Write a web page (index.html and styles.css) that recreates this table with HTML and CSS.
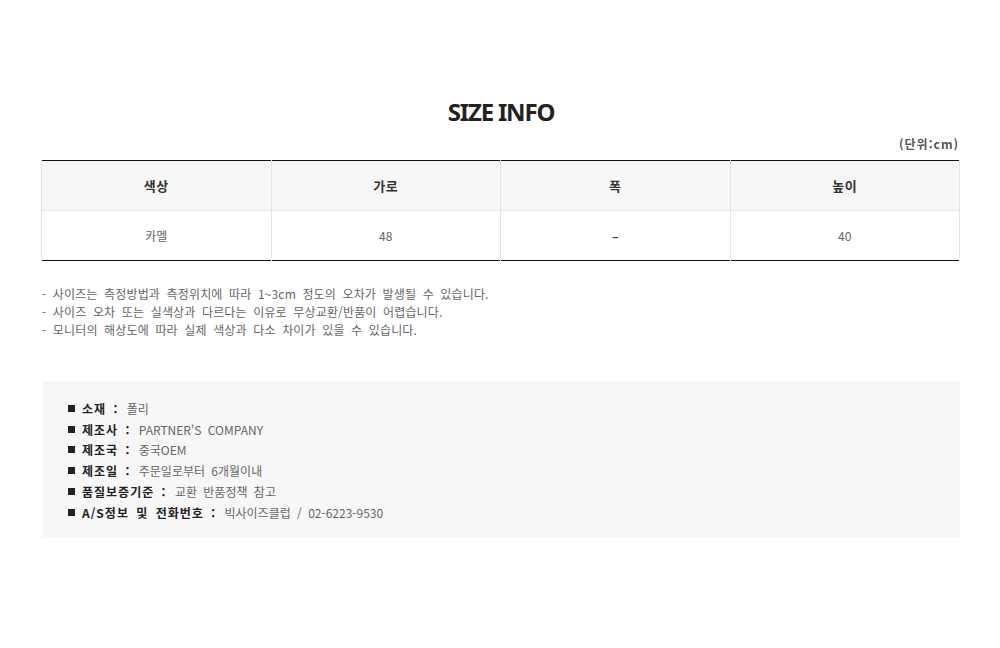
FILE: index.html
```html
<!DOCTYPE html>
<html lang="ko">
<head>
<meta charset="utf-8">
<title>SIZE INFO</title>
<link rel="stylesheet" href="styles.css">
</head>
<body>
<div class="page">
  <h1 class="title">SIZE INFO</h1>
  <div class="unit">(단위:cm)</div>
  <table class="size-table">
    <thead>
      <tr><th>색상</th><th>가로</th><th>폭</th><th>높이</th></tr>
    </thead>
    <tbody>
      <tr><td>카멜</td><td>48</td><td class="dash">–</td><td>40</td></tr>
    </tbody>
  </table>
  <ul class="notes">
    <li>- 사이즈는 측정방법과 측정위치에 따라 1~3cm 정도의 오차가 발생될 수 있습니다.</li>
    <li>- 사이즈 오차 또는 실색상과 다르다는 이유로 무상교환/반품이 어렵습니다.</li>
    <li>- 모니터의 해상도에 따라 실제 색상과 다소 차이가 있을 수 있습니다.</li>
  </ul>
  <ul class="info">
    <li><span class="sq"></span><b>소재 :</b> 폴리</li>
    <li><span class="sq"></span><b>제조사 :</b> PARTNER'S COMPANY</li>
    <li><span class="sq"></span><b>제조국 :</b> 중국OEM</li>
    <li><span class="sq"></span><b>제조일 :</b> 주문일로부터 6개월이내</li>
    <li><span class="sq"></span><b>품질보증기준 :</b> 교환 반품정책 참고</li>
    <li><span class="sq"></span><b>A/S정보 및 전화번호 :</b> 빅사이즈클럽 / 02-6223-9530</li>
  </ul>
</div>
</body>
</html>
```

FILE: styles.css
```css
* { box-sizing: border-box; }
html, body { margin: 0; padding: 0; background: #fff; }
body {
  font-family: "Noto Sans CJK KR", "Noto Sans", sans-serif;
  color: #666;
  font-size: 12px;
}
.page {
  width: 920px;
  margin: 0 0 0 41px;
  padding-top: 96px;
}
.title {
  margin: 0;
  text-align: center;
  font-family: "Noto Sans", "Noto Sans CJK KR", sans-serif;
  font-size: 24px;
  font-weight: 700;
  letter-spacing: -1.2px;
  line-height: 32px;
  color: #222;
}
.unit {
  margin-top: 8px;
  text-align: right;
  padding-right: 2px;
  font-size: 12px;
  font-weight: 700;
  color: #555;
  line-height: 16px;
  letter-spacing: 1px;
}
.size-table {
  margin-top: 8px;
  width: 919px;
  border-collapse: collapse;
  table-layout: fixed;
  border-top: 1px solid #111;
  border-bottom: 1px solid #111;
}
.size-table th, .size-table td {
  border-left: 1px solid #e4e4e4;
  border-right: 1px solid #e4e4e4;
  text-align: center;
  padding: 0;
}
.size-table th {
  background: #f7f7f7;
  font-size: 13px;
  font-weight: 700;
  color: #333;
  height: 50px;
  letter-spacing: 0.5px;
  border-bottom: 1px solid #e8e8e8;
}
.size-table td {
  font-size: 12px;
  color: #666;
  height: 50px;
}
.size-table td.dash { color: #333; font-weight: 700; }
.notes {
  list-style: none;
  margin: 24px 0 0 1px;
  padding: 0;
}
.notes li {
  line-height: 18px;
  font-size: 12px;
  color: #666;
  word-spacing: 3px;
  letter-spacing: 0.15px;
}
.info {
  list-style: none;
  margin: 42px 0 0 1px;
  padding: 17px 26px 14px;
  width: 918px;
  background: #f7f7f7;
}
.info li {
  display: flex;
  align-items: center;
  height: 20.8px;
  font-size: 12px;
  color: #666;
  white-space: pre;
  word-spacing: 3px;
}
.info b {
  color: #222;
  font-weight: 700;
  letter-spacing: 1px;
  margin-right: 2px;
}
.sq {
  display: inline-block;
  width: 7px;
  height: 7px;
  background: #222;
  margin-right: 7px;
}
```
